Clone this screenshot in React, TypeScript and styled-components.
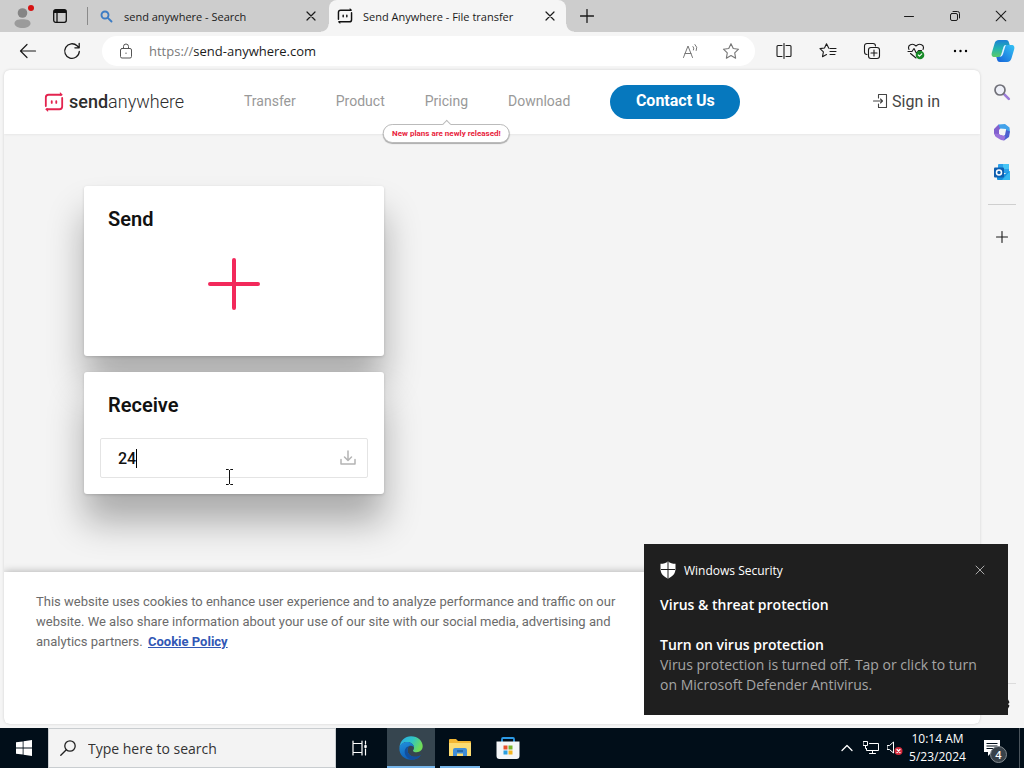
import React from 'react';
import styled, { createGlobalStyle, css } from 'styled-components';

const system = `"Open Sans", "Noto Sans", sans-serif`;
const web = `Roboto, "Liberation Sans", sans-serif`;

const GlobalStyle = createGlobalStyle`
  *, *::before, *::after { box-sizing: border-box; }
  body { margin: 0; font-family: ${system}; color: #1b1b1b; background: #f5f5f5; }
  button, input { font: inherit; color: inherit; border: 0; background: none; padding: 0; margin: 0; outline: 0; }
  svg { display: block; flex: none; }
  h1, h2, h3, p { margin: 0; }
`;

const Desktop = styled.div`
  position: relative;
  min-height: 100vh;
  display: flex;
  flex-direction: column;
`;

const centered = css`
  display: flex;
  align-items: center;
  justify-content: center;
`;

/* ---------- browser chrome ---------- */

const TabBar = styled.div`
  display: flex;
  height: 32px;
  background: #cdcdcd;
`;

const IconButton = styled.button<{ $w: number; $h?: number }>`
  ${centered}
  flex: none;
  width: ${p => p.$w}px;
  height: ${p => p.$h ?? 32}px;
`;

const TabDivider = styled.span`
  flex: none;
  width: 1px;
  height: 18px;
  margin: 7px 2px 0 13px;
  background: #8a8a8a;
`;

const Tab = styled.div<{ $active?: boolean }>`
  position: relative;
  display: flex;
  align-items: center;
  gap: 10px;
  flex: 0 1 237px;
  height: 32px;
  margin-right: 2px;
  padding: 0 4px 0 8px;
  font-size: 11px;
  white-space: nowrap;
  ${p => p.$active && css`
    background: #f5f5f5;
    border-radius: 8px 8px 0 0;
    &::before, &::after {
      content: '';
      position: absolute;
      bottom: 0;
      width: 8px;
      height: 8px;
    }
    &::before { left: -8px; background: radial-gradient(circle at 0 0, #cdcdcd 7px, #f5f5f5 8px); }
    &::after { right: -8px; background: radial-gradient(circle at 100% 0, #cdcdcd 7px, #f5f5f5 8px); }
  `}
`;

const TabTitle = styled.span`
  flex: 1;
  overflow: hidden;
`;

const Spacer = styled.div`
  flex: 1;
`;

const Toolbar = styled.div`
  display: flex;
  align-items: center;
  height: 38px;
  padding-left: 6px;
  background: #f5f5f5;
`;

const AddressBar = styled.div`
  display: flex;
  align-items: center;
  flex: 1;
  height: 30px;
  margin: 0 7px 0 8px;
  padding: 0 4px 0 16px;
  border-radius: 15px;
  background: #fff;
  font-size: 13px;
`;

const Scheme = styled.label`
  margin-left: 15px;
  color: #7a7a7a;
`;

const UrlInput = styled.input`
  flex: 1;
  min-width: 0;
`;

const Workspace = styled.div`
  display: flex;
  flex: 1;
  padding: 0 0 4px 4px;
`;

const Sidebar = styled.aside`
  display: flex;
  flex-direction: column;
  align-items: center;
  width: 44px;
  padding-top: 2px;
`;

const SidebarRule = styled.span`
  width: 28px;
  height: 1px;
  margin: 12px 0;
  background: #cfcfcf;
`;

const SidebarFoot = styled.div`
  border-top: 1px solid #dcdcdc;
`;

/* ---------- web page ---------- */

const Page = styled.div`
  flex: 1;
  display: flex;
  flex-direction: column;
  overflow: hidden;
  border-radius: 6px;
  background: #f4f4f4;
  box-shadow: 0 0 3px rgba(0, 0, 0, 0.15);
  font-family: ${web};
`;

const SiteHeader = styled.header`
  display: flex;
  align-items: center;
  height: 64px;
  padding: 0 40px;
  background: #fff;
  box-shadow: 0 0 3px rgba(0, 0, 0, 0.1);
`;

const Brand = styled.a`
  display: flex;
  align-items: center;
  gap: 5px;
  width: 200px;
  color: #2e2e2e;
  text-decoration: none;
`;

const BrandName = styled.span`
  font-size: 18px;
  line-height: 24px;
  font-weight: 300;
  b { font-weight: 500; }
`;

const SiteNav = styled.nav`
  display: flex;
  align-items: center;
  gap: 40px;
`;

const NavItem = styled.div`
  position: relative;
  padding-bottom: 2px;
`;

const NavLink = styled.a`
  color: #999;
  font-size: 14px;
  line-height: 20px;
  text-decoration: none;
`;

const Promo = styled.span`
  position: absolute;
  top: 33px;
  left: 50%;
  transform: translateX(-50%);
  padding: 0 8px;
  border: 1px solid #bbb;
  border-radius: 10px;
  background: #fff;
  box-shadow: 0 1px 1px rgba(0, 0, 0, 0.3);
  color: #e8243c;
  font-size: 8px;
  line-height: 17px;
  font-weight: 700;
  white-space: nowrap;
  &::before {
    content: '';
    position: absolute;
    top: -4px;
    left: 50%;
    width: 6px;
    height: 6px;
    margin-left: -3px;
    border: solid #bbb;
    border-width: 1px 0 0 1px;
    background: #fff;
    transform: rotate(45deg);
  }
`;

const ContactButton = styled.button`
  width: 130px;
  height: 34px;
  padding-bottom: 4px;
  border-radius: 17px;
  background: #0678be;
  color: #fff;
  font-size: 16px;
  font-weight: 700;
`;

const SignIn = styled.a`
  display: flex;
  align-items: center;
  gap: 3px;
  padding-bottom: 2px;
  color: #444;
  font-size: 16px;
  text-decoration: none;
`;

const Main = styled.main`
  flex: 1;
  display: flex;
  flex-direction: column;
  gap: 16px;
  padding: 52px 80px;
`;

const Card = styled.section`
  position: relative;
  width: 300px;
  padding: 20px 16px 16px;
  border-radius: 3px;
  background: #fff;
  box-shadow: 0 1px 3px rgba(0, 0, 0, 0.15), 0 28px 36px rgba(0, 0, 0, 0.3);
`;

const CardTitle = styled.h2`
  padding-left: 8px;
  color: #111;
  font-size: 20px;
  line-height: 26px;
  font-weight: 600;
`;

const AddFile = styled.button`
  display: block;
  margin: 26px auto 30px;
`;

const KeyField = styled.div`
  position: relative;
  display: flex;
  align-items: center;
  height: 40px;
  margin-top: 20px;
  padding: 0 9px 0 17px;
  border: 1px solid #e4e4e4;
  border-radius: 2px;
`;

const KeyInput = styled.input`
  flex: 1;
  min-width: 0;
  color: #111;
  font-size: 16px;
  font-weight: 500;
  caret-color: transparent;
`;

const Caret = styled.span`
  position: absolute;
  left: 35px;
  top: 10px;
  width: 1px;
  height: 19px;
  background: #000;
`;

const Pointer = styled.svg`
  position: absolute;
  left: 124px;
  top: 29px;
`;

const CookieBar = styled.footer`
  position: relative;
  min-height: 152px;
  padding: 20px 32px;
  background: #fff;
  box-shadow: 0 0 8px rgba(0, 0, 0, 0.3);
`;

const CookieText = styled.p`
  max-width: 600px;
  color: #6b6b6b;
  font-size: 13px;
  line-height: 20px;
`;

const CookieLink = styled.a`
  margin-left: 2px;
  color: #3157b5;
  font-weight: 700;
`;

/* ---------- notification ---------- */

const Toast = styled.section`
  position: absolute;
  right: 16px;
  bottom: 53px;
  width: 364px;
  padding: 16px 16px 20px;
  background: #1f1f1f;
  color: #fff;
`;

const ToastHead = styled.div`
  display: flex;
  align-items: center;
  gap: 8px;
  height: 20px;
  margin-bottom: 15px;
  font-size: 12px;
`;

const ToastTitle = styled.h3`
  font-size: 14px;
  line-height: 20px;
  font-weight: 600;
  & + & { margin-top: 20px; }
`;

const ToastText = styled.p`
  color: #a5a5a5;
  font-size: 14px;
  line-height: 20px;
`;

/* ---------- taskbar ---------- */

const Taskbar = styled.footer`
  display: flex;
  align-items: center;
  height: 40px;
  background: #010e19;
  color: #fff;
`;

const SearchBox = styled.label`
  display: flex;
  align-items: center;
  gap: 12px;
  width: 288px;
  height: 40px;
  padding-left: 11px;
  border: 1px solid #c9cdd0;
  background: #f3f3f3;
  color: #333;
  font-size: 14px;
`;

const SearchInput = styled.input`
  flex: 1;
  min-width: 0;
  &::placeholder { color: #333; opacity: 1; }
`;

const AppButton = styled.button<{ $active?: boolean; $open?: boolean }>`
  ${centered}
  width: ${p => (p.$open ? 40 : 48)}px;
  height: 40px;
  margin: 0 ${p => (p.$open ? 4 : p.$active ? 1 : 0)}px 0 ${p => (p.$open ? 4 : p.$active ? 3 : 0)}px;
  background: ${p => (p.$active ? '#36454f' : 'none')};
  box-shadow: ${p => (p.$active || p.$open ? 'inset 0 -2px 0 #76b5ea' : 'none')};
`;

const Clock = styled.time`
  width: 61px;
  text-align: center;
  font-size: 12px;
  line-height: 18px;
`;

const NoticeButton = styled.button`
  ${centered}
  position: relative;
  width: 48px;
  height: 40px;
`;

const NoticeCount = styled.span`
  ${centered}
  position: absolute;
  left: 22px;
  top: 18px;
  width: 17px;
  height: 17px;
  border: 1px solid #848b90;
  border-radius: 50%;
  background: #38424a;
  font-size: 11px;
  font-weight: 600;
`;

const DesktopEdge = styled.span`
  width: 5px;
  height: 40px;
  margin-left: 3px;
  border-left: 1px solid #4a545c;
`;

/* ---------- icons ---------- */

type IconProps = { s?: number; w?: number; c?: string; children: React.ReactNode; box?: string };

const Line = ({ s = 16, w = 1, c = 'currentColor', box, children }: IconProps) => (
  <svg width={s} height={s} viewBox={box ?? `0 0 ${s} ${s}`} fill="none" stroke={c} strokeWidth={w}
    strokeLinecap="round" strokeLinejoin="round" aria-hidden="true">{children}</svg>
);

const CloseIcon = ({ s = 10, c, w = 1.2 }: { s?: number; c?: string; w?: number }) => (
  <Line s={s} w={w} c={c} box="0 0 10 10"><path d="M1 1l8 8M9 1L1 9" /></Line>
);

const AvatarIcon = () => (
  <svg width="24" height="28" viewBox="0 0 24 28" aria-hidden="true">
    <circle cx="11.500" cy="11" r="4.800" fill="#858585" />
    <path d="M3.500 21.500c0-3.500 3.500-4.300 8-4.300s8 .8 8 4.300c0 2.500-3.500 4.500-8 4.500s-8-2-8-4.500z" fill="#9b9b9b" />
    <circle cx="20" cy="6" r="3" fill="#d61212" />
  </svg>
);

const WorkspacesIcon = () => (
  <svg width="14" height="14" viewBox="0 0 14 14" fill="none" stroke="#111" strokeWidth="1.300" aria-hidden="true">
    <rect x=".7" y=".7" width="12.600" height="12.600" rx="2" />
    <path d="M1 2.500h12" strokeWidth="3" />
    <path d="M4 3v10" />
  </svg>
);

/* rounded square made of two arrows, with a pair of eyes */
const SendGlyph = ({ s, c }: { s: number; c: string }) => (
  <svg width={s} height={s} viewBox="0 0 20 22" fill="none" stroke={c} strokeWidth="2"
    strokeLinecap="round" strokeLinejoin="round" aria-hidden="true">
    <path d="M1 15.500V6a3 3 0 0 1 3-3h14" />
    <path d="M19 6.500V16a3 3 0 0 1-3 3H2" />
    <path d="M16.500 0l3.300 3.200-3.300.8zM3.500 22L.2 18.800 3.500 18z" fill={c} stroke="none" />
    <path d="M7.500 10v2M12.500 10v2" />
  </svg>
);

const star = 'M8 1.500l2 4.300 4.700.6-3.400 3.300.8 4.700L8 12.100l-4.100 2.300.8-4.700L1.300 6.400 6 5.800z';

const CopilotIcon = () => (
  <svg width="24" height="24" viewBox="0 0 24 24" aria-hidden="true">
    <defs>
      <linearGradient id="cp1" x1="0" y1="0" x2="0" y2="1"><stop offset="0" stopColor="#1b7fd6" /><stop offset=".5" stopColor="#22b3b0" /><stop offset="1" stopColor="#5ccb69" /></linearGradient>
      <linearGradient id="cp2" x1="1" y1="0" x2="0" y2="1"><stop offset="0" stopColor="#35c4f5" /><stop offset="1" stopColor="#1460d8" /></linearGradient>
    </defs>
    <path d="M8 1h7c2 0 2.600 1.200 3.100 3l.6 2h-3c-2 0-2.800 1-3.400 3l-2 6.500C9.700 17.500 9 18 7 18H3.500C.8 18 .2 16 .8 13.700l2.700-9C4.200 2.300 5.500 1 8 1z" fill="url(#cp1)" />
    <path d="M16 23H9c-2 0-2.600-1.200-3.100-3l-.6-2H7c2 0 2.800-1 3.400-3l2-6.500c.6-2 1.300-2.500 3.300-2.500h4.800c2.700 0 3.300 2 2.700 4.300l-2.700 9C19.800 21.700 18.500 23 16 23z" fill="url(#cp2)" />
    <path d="M12.500 8.200c.5-1.500 1.300-2.200 2.700-2.200-.8.800-1 1.800-1.400 3l-1.800 6c-.5 1.700-1.400 2.500-3.200 2.700.8-.7 1.300-1.500 1.700-2.700z" fill="#e3f8ff" />
  </svg>
);

const SideSearchIcon = () => (
  <svg width="18" height="18" viewBox="0 0 18 18" fill="none" aria-hidden="true">
    <path d="M10.800 10.800l5 5" stroke="#9b7bd8" strokeWidth="2.600" strokeLinecap="round" />
    <circle cx="7" cy="7" r="5" stroke="#707078" strokeWidth="1.700" fill="#eef0f8" />
  </svg>
);

const OfficeIcon = () => (
  <svg width="18" height="18" viewBox="0 0 18 18" aria-hidden="true">
    <path d="M5.500 1.500L9 3.500 6 7v5l-3.500 1.500L1 10.500V6z" fill="#8260ce" />
    <path d="M5.500 1.500L12 1l4.500 3.500.5 5-4-1.500V6L7 5.500z" fill="#42a2ea" />
    <path d="M17 8.500l-1 5.500-5 3.500-3-3 4-2.500 1-5z" fill="#4c5fd0" />
    <path d="M1.500 10.500L6 11l4 1.500 2.500 1-1.500 4-3-.5-5-3z" fill="#9a73dc" />
    <path d="M7.500 6h3L12 9l-1.500 3h-3L6 9z" fill="#f5f5f5" />
  </svg>
);

const OutlookIcon = () => (
  <svg width="18" height="18" viewBox="0 0 18 18" aria-hidden="true">
    <path d="M5 2a1 1 0 0 1 1-1h9a1 1 0 0 1 1 1v8H5z" fill="#2aa0ea" />
    <path d="M10 1h6v5h-6z" fill="#46c4f5" />
    <path d="M4 8l6 4 7-4v8a1 1 0 0 1-1 1H5a1 1 0 0 1-1-1z" fill="#1590de" />
    <path d="M17 8v8a1 1 0 0 1-1 1H9z" fill="#35b8f1" />
    <rect x="1" y="4.500" width="10" height="10" rx="1" fill="#0f5fb0" />
    <circle cx="6" cy="9.500" r="2.500" fill="none" stroke="#fff" strokeWidth="1.500" />
  </svg>
);

const EdgeIcon = () => (
  <svg width="24" height="24" viewBox="0 0 24 24" aria-hidden="true">
    <defs>
      <linearGradient id="e1" x1="0" y1="0" x2="1" y2=".4"><stop offset="0" stopColor="#2ba9e8" /><stop offset=".55" stopColor="#2fc4c6" /><stop offset="1" stopColor="#6fdc58" /></linearGradient>
      <linearGradient id="e2" x1="0" y1="0" x2=".5" y2="1"><stop offset="0" stopColor="#2191dc" /><stop offset="1" stopColor="#0d5bb5" /></linearGradient>
    </defs>
    <path d="M.5 11C1.300 4.600 6 .3 12 .3c7 0 11.700 5 11.700 9.800 0 4-2.800 6.200-6 6.200-2.500 0-3.700-.9-3.700-1.600 0-.6 1-1 1-3C15 8.500 12 6 8.200 6 4.500 6 1.800 8 .5 11z" fill="url(#e1)" />
    <path d="M.4 12C.6 8.500 4 6 8.200 6c3.900 0 6.800 2.500 6.800 5.500-.6-1-1.600-1.800-3-1.800-2.300 0-3.500 2-3.500 4.300 0 4 3.500 6.800 7.500 6.800 2.500 0 4.500-.8 5.800-1.600-2 2.900-5.600 4.600-9.600 4.600C5.500 23.800 0 18.700.4 12z" fill="url(#e2)" />
    <path d="M8.500 14c0 4 3.500 6.800 7.500 6.800 2.500 0 4.500-.8 5.800-1.600-1.800 2.700-4.600 4.300-8.300 4.500C9 23.300 5.500 19.500 5.700 15.500 5.800 12 8.500 9.700 12 9.700c-2.300 0-3.500 2-3.500 4.300z" fill="#124f9e" />
  </svg>
);

const ExplorerIcon = () => (
  <svg width="22" height="20" viewBox="0 0 22 20" aria-hidden="true">
    <path d="M0 2a1 1 0 0 1 1-1h6l2 2h12a1 1 0 0 1 1 1v14H0z" fill="#f2b632" />
    <path d="M0 5h22v13H0z" fill="#fcdc72" />
    <path d="M4 18v-6a2 2 0 0 1 2-2h10a2 2 0 0 1 2 2v6h-4v-2.500H8V18z" fill="#3f8dd8" />
    <path d="M8 12h6v2H8z" fill="#2569a8" />
  </svg>
);

const StoreIcon = () => (
  <svg width="24" height="24" viewBox="0 0 24 24" aria-hidden="true">
    <path d="M6 6V3a1 1 0 0 1 1-1h10a1 1 0 0 1 1 1v3" fill="none" stroke="#2c9ae6" strokeWidth="1.800" />
    <path d="M.5 5.500h23V20a3 3 0 0 1-3 3h-17a3 3 0 0 1-3-3z" fill="#f4f6f8" />
    <path d="M7.500 9.500h4v4h-4z" fill="#e8502c" /><path d="M12.500 9.500h4v4h-4z" fill="#78b52a" />
    <path d="M7.500 14.500h4v4h-4z" fill="#2a9fe0" /><path d="M12.500 14.500h4v4h-4z" fill="#f5b51e" />
  </svg>
);

export default function App() {
  return (
    <Desktop>
      <GlobalStyle />

      <TabBar>
        <IconButton $w={46} aria-label="Profile"><AvatarIcon /></IconButton>
        <IconButton $w={28} aria-label="Workspaces"><WorkspacesIcon /></IconButton>
        <TabDivider />
        <Tab>
          <Line s={16} w={1.900} c="#3c7cc4"><circle cx="7" cy="7" r="3.500" /><path d="M9.800 9.800l3.700 3.700" /></Line>
          <TabTitle>send anywhere - Search</TabTitle>
          <IconButton $w={24} $h={24} aria-label="Close tab"><CloseIcon /></IconButton>
        </Tab>
        <Tab $active>
          <SendGlyph s={16} c="#111" />
          <TabTitle>Send Anywhere - File transfer</TabTitle>
          <IconButton $w={24} $h={24} aria-label="Close tab"><CloseIcon /></IconButton>
        </Tab>
        <IconButton $w={38} aria-label="New tab"><Line s={14} w={1.300}><path d="M7 .5v13M.5 7h13" /></Line></IconButton>
        <Spacer />
        <IconButton $w={46} aria-label="Minimize"><Line s={10} w={1}><path d="M.5 5.500h9" /></Line></IconButton>
        <IconButton $w={46} aria-label="Restore"><Line s={12}><rect x="1.500" y="3.500" width="7" height="7" rx="1.500" /><path d="M4 1.500h4.500a2 2 0 0 1 2 2V8" /></Line></IconButton>
        <IconButton $w={46} aria-label="Close"><CloseIcon s={12} w={0.900} /></IconButton>
      </TabBar>

      <Toolbar>
        <IconButton $w={44} aria-label="Back"><Line s={18} w={1.200}><path d="M16.500 9H1.500M8 2.500L1.500 9 8 15.500" /></Line></IconButton>
        <IconButton $w={44} aria-label="Refresh"><Line s={18} w={1.300}><path d="M16.300 9.500a7.300 7.300 0 1 1-2.200-5.700L16 5.600M16.200 1.500v4.300h-4.300" /></Line></IconButton>
        <AddressBar>
          <Line s={16} c="#555"><rect x="2.500" y="5.500" width="11" height="9.500" rx="1.500" /><path d="M5.500 5.500V3.500a2.500 2.500 0 0 1 5 0v2M8 10v.5" /></Line>
          <Scheme htmlFor="url">https://</Scheme>
          <UrlInput id="url" defaultValue="send-anywhere.com" />
          <IconButton $w={40} $h={28} aria-label="Read aloud">
            <Line s={18} c="#777"><path d="M1.500 15.500L6 4l4.500 11.500M3 11.500h6M11 4.500q1.500 1.500.5 3.500M13 2.500q3 2.500 1.300 6" /></Line>
          </IconButton>
          <IconButton $w={40} $h={28} aria-label="Add to favorites"><Line s={18} c="#777" box="0 0 16 16"><path d={star} /></Line></IconButton>
        </AddressBar>
        <IconButton $w={44} aria-label="Split screen">
          <Line s={16} w={1.100}><path d="M6 2.500H2a1 1 0 0 0-1 1v9a1 1 0 0 0 1 1h4M10 2.500h4a1 1 0 0 1 1 1v9a1 1 0 0 1-1 1h-4M8 .5v15" /></Line>
        </IconButton>
        <IconButton $w={44} aria-label="Favorites">
          <Line s={18} w={1.100}><path d="M9.800 6.300L7.500 1.800 5.500 6 1 6.600l3.400 3.300-.9 4.800 4-2.200M11 6.500h6M11 9.500h6M11 12.500h5" /></Line>
        </IconButton>
        <IconButton $w={44} aria-label="Collections">
          <Line s={18} w={1.100}><path d="M4 12.500A2.500 2.500 0 0 1 1.500 10V4A2.500 2.500 0 0 1 4 1.500h6A2.500 2.500 0 0 1 12.500 4" /><rect x="5.500" y="5.500" width="11" height="11" rx="2.500" /><path d="M11 8v6M8 11h6" /></Line>
        </IconButton>
        <IconButton $w={44} aria-label="Browser essentials">
          <Line s={18} w={1.100}>
            <path d="M2 7.500C0 3 5.500.5 9 4c3.500-3.500 9-1 7 3.500M1 9.500h4l2-3 2.500 5 2-3h3M3.500 11.500L9 16" />
            <circle cx="13" cy="13" r="4.300" fill="#178a27" stroke="none" /><path d="M11.300 13l1.200 1.200 2.300-2.400" stroke="#fff" />
          </Line>
        </IconButton>
        <IconButton $w={44} aria-label="Settings and more">
          <svg width="16" height="4" viewBox="0 0 16 4" aria-hidden="true"><circle cx="3" cy="2" r="1.200" /><circle cx="8.500" cy="2" r="1.200" /><circle cx="14" cy="2" r="1.200" /></svg>
        </IconButton>
        <IconButton $w={42} aria-label="Copilot"><CopilotIcon /></IconButton>
      </Toolbar>

      <Workspace>
        <Page>
          <SiteHeader>
            <Brand href="#" aria-label="Send Anywhere">
              <SendGlyph s={20} c="#e3244f" />
              <BrandName><b>send</b>anywhere</BrandName>
            </Brand>
            <SiteNav>
              <NavItem><NavLink href="#">Transfer</NavLink></NavItem>
              <NavItem><NavLink href="#">Product</NavLink></NavItem>
              <NavItem><NavLink href="#">Pricing</NavLink><Promo>New plans are newly released!</Promo></NavItem>
              <NavItem><NavLink href="#">Download</NavLink></NavItem>
              <ContactButton>Contact Us</ContactButton>
            </SiteNav>
            <Spacer />
            <SignIn href="#">
              <Line s={16} w={1.100}><path d="M5.500 5V1.500h8v13h-8V11M.5 8h9M7.500 6l2 2-2 2" /></Line>
              Sign in
            </SignIn>
          </SiteHeader>

          <Main>
            <Card>
              <CardTitle>Send</CardTitle>
              <AddFile aria-label="Add files">
                <Line s={52} w={4} c="#f2295b"><path d="M26 2v48M2 26h48" /></Line>
              </AddFile>
            </Card>
            <Card>
              <CardTitle><label htmlFor="key">Receive</label></CardTitle>
              <KeyField>
                <KeyInput id="key" defaultValue="24" />
                <Caret />
                <IconButton $w={20} $h={20} aria-label="Receive">
                  <Line s={16} w={1.500} c="#b4b4b4"><path d="M8 1v9M4.500 7L8 10.500 11.500 7M1 9.500V14h14V9.500" /></Line>
                </IconButton>
                <Pointer width="9" height="18" viewBox="0 0 9 18" fill="none" stroke="#111" aria-hidden="true">
                  <path d="M1 1.500h2.500l1 1 1-1H8M4.500 2v14M1 16.500h2.500l1-1 1 1H8" />
                </Pointer>
              </KeyField>
            </Card>
          </Main>

          <CookieBar>
            <CookieText>
              This website uses cookies to enhance user experience and to analyze performance and traffic on our website. We also share information about your use of our site with our social media, advertising and analytics partners. <CookieLink href="#">Cookie Policy</CookieLink>
            </CookieText>
          </CookieBar>
        </Page>

        <Sidebar>
          <IconButton $w={40} $h={40} aria-label="Search"><SideSearchIcon /></IconButton>
          <IconButton $w={40} $h={40} aria-label="Microsoft 365"><OfficeIcon /></IconButton>
          <IconButton $w={40} $h={40} aria-label="Outlook"><OutlookIcon /></IconButton>
          <SidebarRule />
          <IconButton $w={40} $h={40} aria-label="Customize"><Line s={12} w={1.100}><path d="M6 .5v11M.5 6h11" /></Line></IconButton>
          <Spacer />
          <SidebarFoot>
            <IconButton $w={28} $h={40} aria-label="Settings">
              <Line s={16} w={1.300}><circle cx="8" cy="8" r="2.300" /><path d="M6.500 1.500h3l.5 2 1.500.8 2-.6 1.300 2.500L13.300 8l1.500 1.800-1.300 2.500-2-.6-1.500.8-.5 2h-3l-.5-2-1.500-.8-2 .6-1.300-2.500L2.700 8 1.200 6.200l1.300-2.500 2 .6L6 3.500z" /></Line>
            </IconButton>
          </SidebarFoot>
        </Sidebar>
      </Workspace>

      <Taskbar>
        <AppButton aria-label="Start">
          <svg width="16" height="16" viewBox="0 0 16 16" fill="#fff" aria-hidden="true"><path d="M0 2.300l6.700-.9v6.200H0zM7.500 1.300L16 0v7.600H7.500zM0 8.400h6.700v6.200L0 13.700zM7.500 8.400H16V16l-8.500-1.300z" /></svg>
        </AppButton>
        <SearchBox>
          <Line s={16} w={1.300} c="#222"><circle cx="10" cy="6" r="5.200" /><path d="M6.300 9.800L.8 15.300" /></Line>
          <SearchInput aria-label="Search" placeholder="Type here to search" />
        </SearchBox>
        <AppButton aria-label="Task view">
          <Line s={18} w={1.200}><path d="M2 2v2.500h9V2M2 16v-2.500h9V16M2 5v8M11 5v8M14.500 2v3M14.500 10v6" /><path d="M14.500 7v1" strokeWidth="2.500" /></Line>
        </AppButton>
        <AppButton $active aria-label="Microsoft Edge"><EdgeIcon /></AppButton>
        <AppButton $open aria-label="File Explorer"><ExplorerIcon /></AppButton>
        <AppButton aria-label="Microsoft Store"><StoreIcon /></AppButton>
        <Spacer />
        <IconButton $w={24} $h={40} aria-label="Show hidden icons"><Line s={12} w={1.300}><path d="M1 8.500l5-5 5 5" /></Line></IconButton>
        <IconButton $w={24} $h={40} aria-label="Network">
          <Line s={16}><path d="M6.500 3.500h9v7h-12v-2M9.500 10.500v3M6.500 13.500h6" /><rect x=".5" y="1.500" width="4" height="4" /><path d="M2.500 5.500v3h1" /></Line>
        </IconButton>
        <IconButton $w={24} $h={40} aria-label="Volume muted">
          <Line s={16}><path d="M.5 5.500h2l4-3.500v11l-4-3.500h-2z" /><circle cx="11.500" cy="11" r="4" fill="#d62a3c" stroke="none" /><path d="M10 9.500l3 3M13 9.500l-3 3" stroke="#fff" strokeWidth="1.200" /></Line>
        </IconButton>
        <Clock>10:14 AM<br />5/23/2024</Clock>
        <NoticeButton aria-label="Notifications">
          <svg width="18" height="18" viewBox="0 0 18 18" aria-hidden="true"><path d="M1 1h16v12H9l-4 4v-4H1z" fill="#fff" /><path d="M3.500 4.500h11M3.500 7h11M3.500 9.500h8" stroke="#010e19" /></svg>
          <NoticeCount>4</NoticeCount>
        </NoticeButton>
        <DesktopEdge />
      </Taskbar>

      <Toast>
        <ToastHead>
          <svg width="16" height="18" viewBox="0 0 16 18" aria-hidden="true"><path d="M8 .5c2 1.700 4.500 2.300 7.500 2.300V8c0 4.500-2.800 7.500-7.500 9.500C3.300 15.500.5 12.500.5 8V2.800C3.500 2.800 6 2.200 8 .5z" fill="#fff" /><path d="M8 1v16M1 8.500h14" stroke="#1f1f1f" /></svg>
          Windows Security
          <Spacer />
          <IconButton $w={24} $h={24} aria-label="Dismiss"><CloseIcon c="#aaa" w={1} /></IconButton>
        </ToastHead>
        <ToastTitle>Virus &amp; threat protection</ToastTitle>
        <ToastTitle>Turn on virus protection</ToastTitle>
        <ToastText>Virus protection is turned off. Tap or click to turn on Microsoft Defender Antivirus.</ToastText>
      </Toast>
    </Desktop>
  );
}
